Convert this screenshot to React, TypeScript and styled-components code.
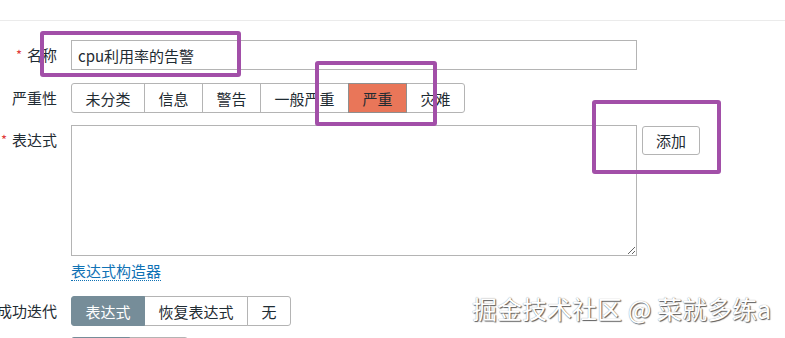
import React from "react";
import styled, { createGlobalStyle } from "styled-components";

const GlobalStyle = createGlobalStyle`
  body {
    margin: 0;
    background: #fff;
    font-family: "Noto Sans CJK SC", "Noto Sans", sans-serif;
    color: #1f2c33;
  }
`;

type Tone = "high" | "slate";

const severities = ["未分类", "信息", "警告", "一般严重", "严重", "灾难"];
const okModes = ["表达式", "恢复表达式", "无"];
const problemModes = ["单个", "多重"];

const App = () => {
  return (
    <Page>
      <GlobalStyle />
      <TopBar />
      <Form>
        <Row $mb={13}>
          <Label>
            <Star>*</Star>名称
          </Label>
          <TextInput defaultValue="cpu利用率的告警" />
        </Row>
        <Row $mb={12}>
          <Label>严重性</Label>
          <Segmented>
            {severities.map((s) => (
              <SegButton key={s} $on={s === "严重"} $tone="high">
                {s}
              </SegButton>
            ))}
          </Segmented>
        </Row>
        <Row $mb={0}>
          <Label>
            <Star>*</Star>表达式
          </Label>
          <ExprBox>
            <Area />
            <AddButton>添加</AddButton>
          </ExprBox>
        </Row>
        <Row $mb={15}>
          <Label />
          <LinkLine>
            <Link>表达式构造器</Link>
          </LinkLine>
        </Row>
        <Row $mb={11}>
          <Label>成功迭代</Label>
          <Segmented>
            {okModes.map((s) => (
              <SegButton key={s} $on={s === "表达式"} $tone="slate">
                {s}
              </SegButton>
            ))}
          </Segmented>
        </Row>
        <Row $mb={0}>
          <Label>问题事件生成模式</Label>
          <Segmented>
            {problemModes.map((s) => (
              <SegButton key={s} $on={s === "单个"} $tone="slate">
                {s}
              </SegButton>
            ))}
          </Segmented>
        </Row>
      </Form>

      <Mark $x={40} $y={31} $w={201} $h={46} />
      <Mark $x={315} $y={61} $w={122} $h={65} />
      <Mark $x={592} $y={100} $w={129} $h={74} />

      <Watermark>掘金技术社区 @ 菜就多练a</Watermark>
    </Page>
  );
};

export default App;

const Watermark = styled.div`
  position: absolute;
  right: 14px;
  top: 293px;
  font-size: 25px;
  line-height: 30px;
  color: #fff;
  white-space: nowrap;
  text-shadow: 1px 1px 1px #5c5c5c, 0 0 1px #8a8a8a;
`;

const Mark = styled.div<{ $x: number; $y: number; $w: number; $h: number }>`
  position: absolute;
  left: ${(p) => p.$x}px;
  top: ${(p) => p.$y}px;
  width: ${(p) => p.$w}px;
  height: ${(p) => p.$h}px;
  box-sizing: border-box;
  border: 4px solid #a24fa8;
  border-radius: 3px;
  pointer-events: none;
`;

const Link = styled.span`
  font-size: 15px;
  line-height: 18px;
  color: #0f72b5;
  border-bottom: 1px dotted #0f72b5;
  cursor: pointer;
`;

const LinkLine = styled.div`
  padding-top: 6px;
  height: 19px;
  display: flex;
  align-items: flex-start;
`;

const AddButton = styled.button`
  width: 58px;
  height: 29px;
  box-sizing: border-box;
  padding: 0;
  margin-top: 1px;
  border: 1px solid #b4b4b4;
  border-radius: 3px;
  background: #fff;
  font: inherit;
  font-size: 15px;
  color: #1f2c33;
`;

const Area = styled.textarea`
  width: 566px;
  height: 131px;
  box-sizing: border-box;
  margin: 0;
  border: 1px solid #b4b4b4;
  resize: vertical;
  font: inherit;
  font-size: 15px;
  outline: none;
`;

const ExprBox = styled.div`
  display: flex;
  align-items: flex-start;
  gap: 5px;
`;

const SegButton = styled.button<{ $on?: boolean; $tone: Tone }>`
  position: relative;
  height: 30px;
  box-sizing: border-box;
  padding: 0 13.5px;
  margin: 0 0 0 -1px;
  border: 1px solid #b4b4b4;
  border-radius: 0;
  background: #fff;
  font: inherit;
  font-size: 15px;
  color: #1f2c33;
  white-space: nowrap;

  &:first-child {
    margin-left: 0;
    border-radius: 3px 0 0 3px;
  }
  &:last-child {
    border-radius: 0 3px 3px 0;
  }

  ${(p) =>
    p.$on && p.$tone === "high" &&
    `
    background: #e97659;
    border-color: #8f8f8f;
    z-index: 1;
  `}
  ${(p) =>
    p.$on && p.$tone === "slate" &&
    `
    background: #768d99;
    border-color: #768d99;
    color: #fff;
    z-index: 1;
  `}
`;

const Segmented = styled.div`
  display: flex;
`;

const TextInput = styled.input`
  width: 566px;
  height: 30px;
  box-sizing: border-box;
  margin: 0;
  padding: 0 6px;
  border: 1px solid #b4b4b4;
  font: inherit;
  font-size: 15px;
  color: #1f2c33;
  outline: none;
`;

const Star = styled.span`
  color: #e03b3b;
  font-size: 13px;
  margin-right: 5px;
`;

const Label = styled.div`
  width: 57px;
  flex-shrink: 0;
  display: flex;
  justify-content: flex-end;
  line-height: 30px;
  font-size: 15px;
  white-space: nowrap;
`;

const Row = styled.div<{ $mb: number }>`
  display: flex;
  align-items: flex-start;
  gap: 14px;
  margin-bottom: ${(p) => p.$mb}px;
`;

const Form = styled.div`
  padding-top: 19px;
  display: flex;
  flex-direction: column;
`;

const TopBar = styled.div`
  height: 20px;
  border-bottom: 1px solid #ebebeb;
`;

const Page = styled.div`
  position: relative;
  width: 785px;
  height: 338px;
  overflow: hidden;
  background: #fff;
`;
